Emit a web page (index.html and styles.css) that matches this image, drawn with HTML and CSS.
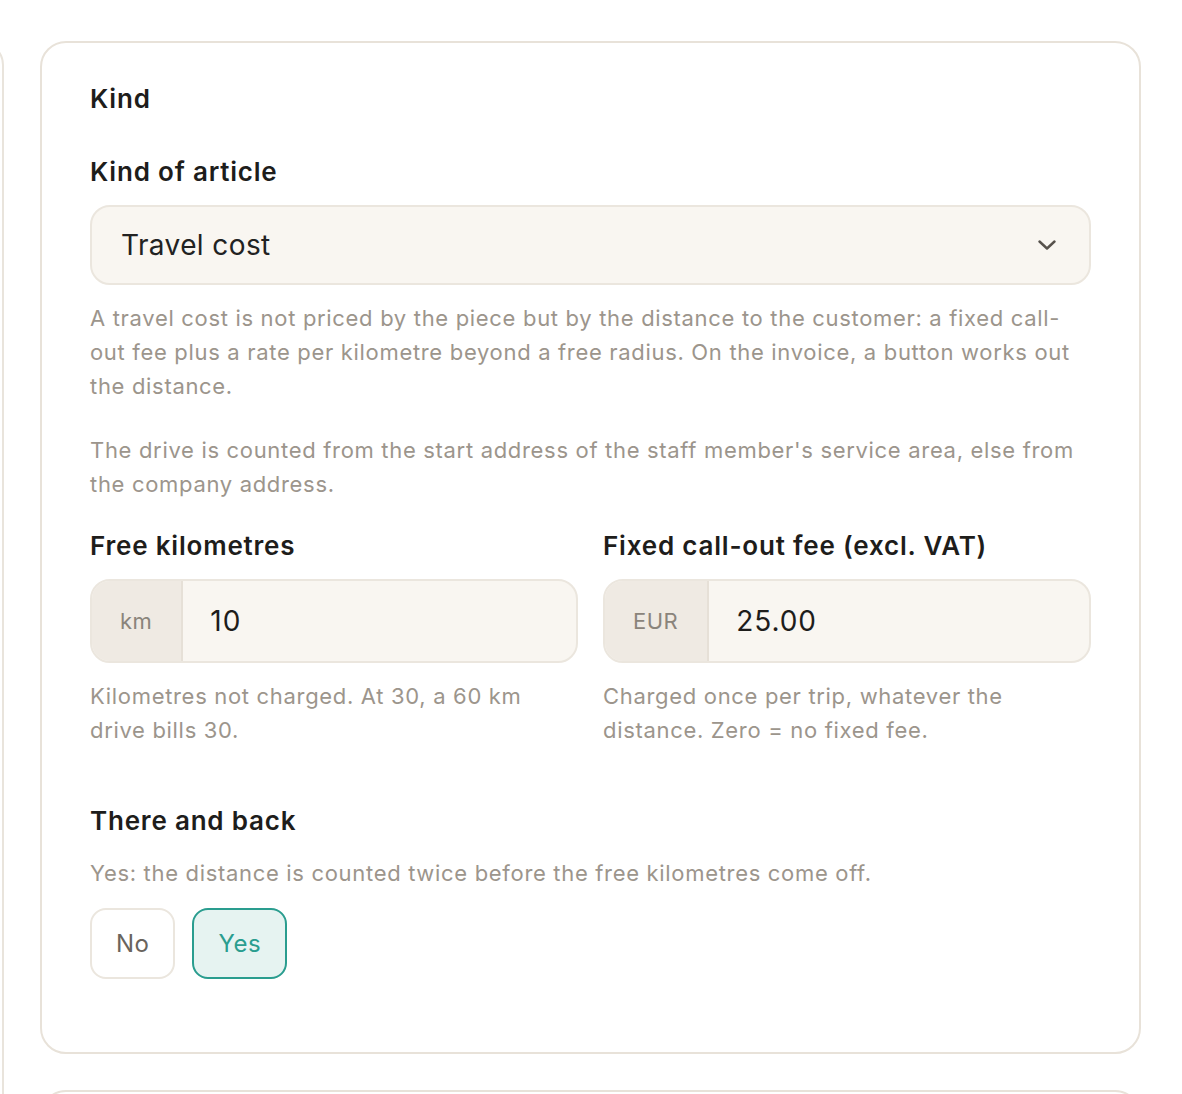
FILE: index.html
```html
<!DOCTYPE html>
<html lang="en">
<head>
<meta charset="utf-8">
<title>Article kind</title>
<link rel="stylesheet" href="styles.css">
</head>
<body>
<div class="layout">
  <aside class="side-panel"></aside>
  <main class="stack">
    <section class="card">
      <h2 class="card-title">Kind</h2>
      <div class="field">
        <label class="field-label">Kind of article</label>
        <div class="select">
          <span class="select-value">Travel cost</span>
          <svg class="chevron" width="18" height="10" viewBox="0 0 18 10" aria-hidden="true"><path d="M1.5 1.5 L9 8.5 L16.5 1.5" fill="none" stroke="#57524c" stroke-width="2.4" stroke-linecap="round" stroke-linejoin="round"/></svg>
        </div>
        <p class="help help-first">A travel cost is not priced by the piece but by the distance to the customer: a fixed call-out fee plus a rate per kilometre beyond a free radius. On the invoice, a button works out the distance.</p>
        <p class="help help-gap">The drive is counted from the start address of the staff member's service area, else from the company address.</p>
      </div>
      <div class="field-row">
        <div class="field">
          <label class="field-label">Free kilometres</label>
          <div class="input-group">
            <span class="prefix">km</span>
            <span class="input-value">10</span>
          </div>
          <p class="help hint">Kilometres not charged. At 30, a 60 km drive bills 30.</p>
        </div>
        <div class="field">
          <label class="field-label">Fixed call-out fee (excl. VAT)</label>
          <div class="input-group">
            <span class="prefix">EUR</span>
            <span class="input-value">25.00</span>
          </div>
          <p class="help hint">Charged once per trip, whatever the distance. Zero = no fixed fee.</p>
        </div>
      </div>
      <div class="field field-toggle">
        <label class="field-label">There and back</label>
        <p class="help toggle-help">Yes: the distance is counted twice before the free kilometres come off.</p>
        <div class="toggle">
          <button class="toggle-btn">No</button>
          <button class="toggle-btn active">Yes</button>
        </div>
      </div>
    </section>
    <section class="card card-next"></section>
  </main>
</div>
</body>
</html>
```

FILE: styles.css
```css
* { box-sizing: border-box; }
html, body { margin: 0; padding: 0; background: #ffffff; overflow: hidden; }
body {
  font-family: "Inter", "DejaVu Sans", sans-serif;
  color: #1e1d1b;
  height: 1094px;
}
.layout {
  display: flex;
  gap: 36px;
  padding-top: 41px;
  padding-right: 41px;
}
.side-panel {
  flex: 0 0 104px;
  margin-left: -100px;
  height: 1200px;
  border: 2px solid #e9e4dc;
  border-radius: 24px;
  background: #fff;
}
.stack {
  flex: 1;
  display: flex;
  flex-direction: column;
  gap: 36px;
}
.card {
  border: 2px solid #e8e2d9;
  border-radius: 26px;
  background: #fff;
  padding: 38px 48px 73px;
}
.card-next { height: 200px; padding: 0; }
.card-title {
  margin: 0 0 37px;
  font-size: 26px;
  line-height: 36px;
  font-weight: 600;
  letter-spacing: 0.8px;
}
.field { display: flex; flex-direction: column; }
.field-label {
  font-size: 26px;
  line-height: 36px;
  font-weight: 600;
  letter-spacing: 0.8px;
  margin-bottom: 15px;
}
.select {
  height: 80px;
  border: 2px solid #ebe6de;
  border-radius: 20px;
  background: #f9f6f1;
  display: flex;
  align-items: center;
  justify-content: space-between;
  padding: 0 33px 0 29px;
}
.select-value { font-size: 28px; color: #222; letter-spacing: 0.4px; }
.chevron { display: block; }
.help {
  margin: 0;
  font-size: 22px;
  line-height: 34px;
  color: #9c958c;
  letter-spacing: 0.68px;
}
.help-first { margin-top: 16px; }
.help-gap { margin-top: 30px; }
.field-row {
  margin-top: 27px;
  display: grid;
  grid-template-columns: 1fr 1fr;
  gap: 25px;
}
.input-group {
  height: 84px;
  border: 2px solid #ebe6de;
  border-radius: 20px;
  background: #f9f6f1;
  display: flex;
  align-items: stretch;
  overflow: hidden;
}
.prefix {
  display: flex;
  align-items: center;
  padding: 0 29px 0 28px;
  background: #efeae3;
  border-right: 2px solid #e6e0d7;
  font-size: 22px;
  color: #8a847b;
  letter-spacing: 0.5px;
}
.input-value {
  display: flex;
  align-items: center;
  padding-left: 27px;
  font-size: 28px;
  color: #1e1d1b;
  letter-spacing: 0.9px;
}
.hint { margin-top: 16px; }
.field-toggle { margin-top: 56px; }
.field-toggle .field-label { margin-bottom: 17px; }
.toggle-help { margin-bottom: 18px; }
.toggle { display: flex; gap: 17px; }
.toggle-btn {
  font-family: inherit;
  height: 71px;
  padding: 0 24px;
  border: 2px solid #ebe6de;
  border-radius: 16px;
  background: #fff;
  font-size: 24px;
  letter-spacing: 0.5px;
  color: #6a645d;
  cursor: pointer;
}
.toggle-btn.active {
  background: #e6f3f1;
  border-color: #2a9d8f;
  color: #2a9d8f;
}
```
